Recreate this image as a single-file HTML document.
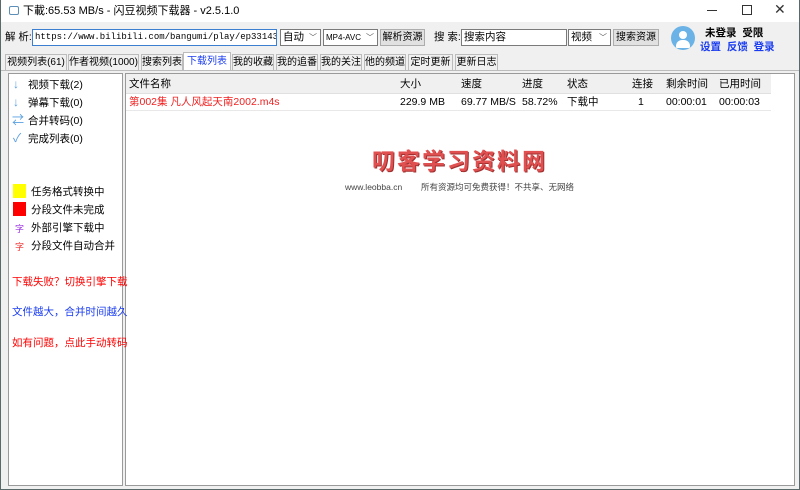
<!DOCTYPE html>
<html><head><meta charset="utf-8"><style>
*{margin:0;padding:0;box-sizing:border-box}
body{width:800px;height:490px;position:relative;overflow:hidden;background:#f0f0f0;font-family:"Liberation Sans","Noto Sans CJK SC",sans-serif;font-size:10.5px;color:#000}
.a{position:absolute;white-space:nowrap;line-height:13px}
.win{position:absolute;left:0;top:0;width:800px;height:490px;border:1px solid #5a6a6a;border-top:none}
.inp{position:absolute;background:#fff;border:1px solid #7a7a7a;height:17px;line-height:15px;padding-left:2px;overflow:hidden;white-space:nowrap}
.btn{position:absolute;background:#e1e1e1;border:1px solid #adadad;height:17px;line-height:15px;text-align:center;white-space:nowrap;overflow:hidden;font-size:10px}
.tab{position:absolute;top:54px;height:16px;line-height:15px;background:#f0f0f0;border:1px solid #bcbcbc;border-bottom:none;text-align:center;white-space:nowrap;overflow:hidden;font-size:10px}
.dd:after{content:"﹀";position:absolute;right:3px;top:0;font-size:8px;color:#555}
</style></head><body>
<div class="win"></div>
<div class="a" style="left:1px;top:0;width:798px;height:22px;background:#fff"></div>
<div class="a" style="left:9px;top:6px;width:10px;height:9px;border:1px solid #5b8fb8;border-radius:2px"></div>
<div class="a" style="left:23px;top:5px;font-size:11px">下載:65.53 MB/s - 闪豆视频下载器 - v2.5.1.0</div>
<div class="a" style="left:707px;top:10px;width:10px;height:1px;background:#333"></div>
<div class="a" style="left:742px;top:5px;width:10px;height:10px;border:1px solid #333"></div>
<div class="a" style="left:774px;top:3px;font-size:14px;color:#333">✕</div>

<div class="a" style="left:5px;top:31px">解 析:</div>
<div class="inp" style="left:32px;top:29px;width:245px;font-family:'Liberation Mono',monospace;font-size:9px;border-color:#3c7fd0">https://www.bilibili.com/bangumi/play/ep331432?spm_id</div>
<div class="inp dd" style="left:280px;top:29px;width:41px;background:#fff">自动</div>
<div class="inp dd" style="left:323px;top:29px;width:55px;font-size:8px">MP4-AVC</div>
<div class="btn" style="left:380px;top:29px;width:45px">解析资源</div>
<div class="a" style="left:434px;top:31px">搜 索:</div>
<div class="inp" style="left:461px;top:29px;width:106px">搜索内容</div>
<div class="inp dd" style="left:568px;top:29px;width:43px">视频</div>
<div class="btn" style="left:613px;top:29px;width:46px">搜索资源</div>
<div class="a" style="left:671px;top:26px;width:24px;height:24px;border-radius:50%;background:#6bb3e6;overflow:hidden">
<div class="a" style="left:8px;top:5px;width:8px;height:8px;border-radius:50%;background:#fff"></div>
<div class="a" style="left:5px;top:14px;width:14px;height:8px;border-radius:6px 6px 1px 1px;background:#fff"></div></div>
<div class="a" style="left:705px;top:27px;font-weight:bold">未登录&nbsp; 受限</div>
<div class="a" style="left:700px;top:41px;font-weight:bold;color:#1a3cf0">设置&nbsp; 反馈&nbsp; 登录</div>

<div class="tab" style="left:5px;width:62px">视频列表(61)</div>
<div class="tab" style="left:68px;width:71px">作者视频(1000)</div>
<div class="tab" style="left:141px;width:42px">搜索列表</div>
<div class="tab" style="left:183px;top:52px;height:19px;line-height:17px;width:48px;background:#fff;color:#1a3cf0">下载列表</div>
<div class="tab" style="left:232px;width:42px">我的收藏</div>
<div class="tab" style="left:276px;width:42px">我的追番</div>
<div class="tab" style="left:320px;width:42px">我的关注</div>
<div class="tab" style="left:364px;width:42px">他的频道</div>
<div class="tab" style="left:408px;width:45px">定时更新</div>
<div class="tab" style="left:455px;width:43px">更新日志</div>

<div class="a" style="left:1px;top:70px;width:798px;height:1px;background:#bcbcbc"></div>
<div class="a" style="left:8px;top:73px;width:115px;height:413px;background:#fff;border:1px solid #9a9a9a"></div>
<div class="a" style="left:125px;top:73px;width:670px;height:413px;background:#fff;border:1px solid #9a9a9a"></div>

<div class="a" style="left:13px;top:78px;color:#5aa0e0;font-size:12px">↓</div><div class="a" style="left:28px;top:79px">视频下载(2)</div>
<div class="a" style="left:13px;top:96px;color:#5aa0e0;font-size:12px">↓</div><div class="a" style="left:28px;top:97px">弹幕下载(0)</div>
<div class="a" style="left:12px;top:114px;color:#5aa0e0;font-size:12px">⇄</div><div class="a" style="left:28px;top:115px">合并转码(0)</div>
<div class="a" style="left:13px;top:132px;color:#5aa0e0;font-size:12px">✓</div><div class="a" style="left:28px;top:133px">完成列表(0)</div>
<div class="a" style="left:13px;top:184px;width:13px;height:14px;background:#ff0"></div><div class="a" style="left:31px;top:186px">任务格式转换中</div>
<div class="a" style="left:13px;top:202px;width:13px;height:14px;background:#f00"></div><div class="a" style="left:31px;top:204px">分段文件未完成</div>
<div class="a" style="left:15px;top:223px;color:#9a30e0;font-size:9px">字</div><div class="a" style="left:31px;top:222px">外部引擎下载中</div>
<div class="a" style="left:15px;top:241px;color:#f03030;font-size:9px">字</div><div class="a" style="left:31px;top:240px">分段文件自动合并</div>
<div class="a" style="left:12px;top:276px;color:#f00">下载失败？切换引擎下载</div>
<div class="a" style="left:12px;top:306px;color:#1a3cf0">文件越大，合并时间越久</div>
<div class="a" style="left:12px;top:337px;color:#f00">如有问题，点此手动转码</div>

<div class="a" style="left:126px;top:74px;width:645px;height:20px;background:#f0f0f0;border-bottom:1px solid #e0e0e0"></div>
<div class="a" style="left:129px;top:78px">文件名称</div>
<div class="a" style="left:400px;top:78px">大小</div>
<div class="a" style="left:461px;top:78px">速度</div>
<div class="a" style="left:522px;top:78px">进度</div>
<div class="a" style="left:567px;top:78px">状态</div>
<div class="a" style="left:632px;top:78px">连接</div>
<div class="a" style="left:666px;top:78px">剩余时间</div>
<div class="a" style="left:719px;top:78px">已用时间</div>
<div class="a" style="left:126px;top:110px;width:645px;height:1px;background:#e8e8e8"></div>
<div class="a" style="left:129px;top:96px;color:#f02020">第002集 凡人风起天南2002.m4s</div>
<div class="a" style="left:400px;top:96px">229.9 MB</div>
<div class="a" style="left:461px;top:96px">69.77 MB/S</div>
<div class="a" style="left:522px;top:96px">58.72%</div>
<div class="a" style="left:567px;top:96px">下载中</div>
<div class="a" style="left:638px;top:96px">1</div>
<div class="a" style="left:666px;top:96px">00:00:01</div>
<div class="a" style="left:719px;top:96px">00:00:03</div>

<div class="a" style="left:372px;top:149px;font-size:23px;line-height:25px;font-weight:bold;color:#e05050;text-shadow:1px 1px 0 #a03030;letter-spacing:2px">叨客学习资料网</div>
<div class="a" style="left:345px;top:181px;font-size:8.5px;color:#444">www.leobba.cn</div>
<div class="a" style="left:421px;top:181px;font-size:8.5px;color:#444">所有资源均可免费获得！不共享、无网络</div>
</body></html>
